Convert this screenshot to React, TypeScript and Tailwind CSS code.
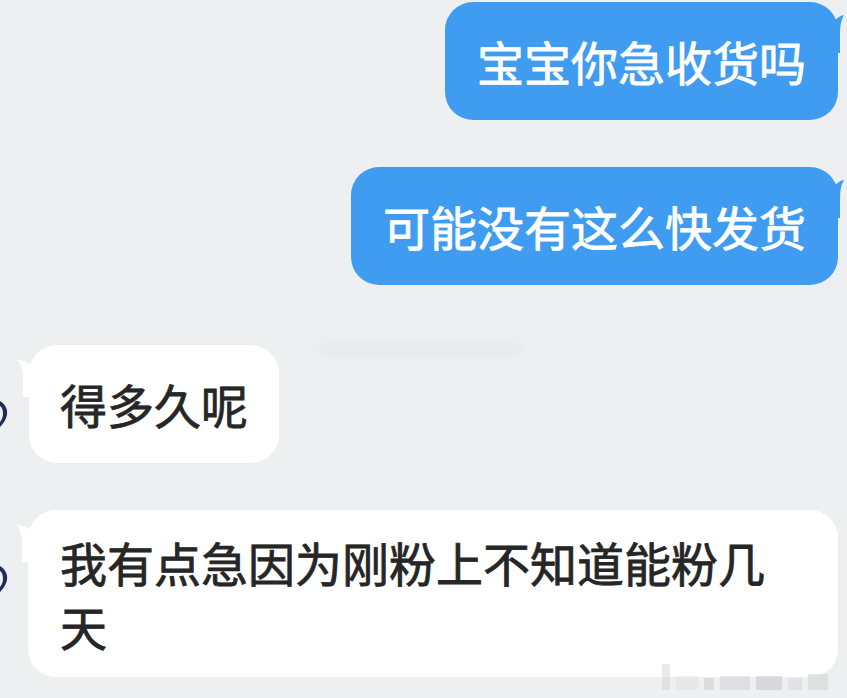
import React from 'react';

const font = { fontFamily: '"Noto Sans CJK SC", "Noto Sans", sans-serif' };

const RightTail = () => (
  <svg className="absolute -right-[8px] top-[11px]" width="14" height="40" viewBox="0 0 14 40">
    <path d="M0 9 C4 7 6 3 12 2 C9 7 8 13 8 20 L8 40 L0 40 Z" fill="#3f9cf1" />
  </svg>
);

const LeftTail = () => (
  <svg className="absolute -left-[12px] top-[12px]" width="16" height="40" viewBox="0 0 16 40">
    <path d="M16 8 C11 6 7 3 0 3 C4 7 6 13 6 20 L6 40 L16 40 Z" fill="#ffffff" />
  </svg>
);

const Avatar = () => (
  <div className="w-[12px] shrink-0 pt-[56px]">
    <svg width="12" height="26" viewBox="0 0 12 26">
      <path d="M0 0 C5 3 8 8 7 14 C6 19 3 23 0 26 L0 21 C2 18 3 16 3 13 C3 9 2 6 0 5 Z" fill="#1f2b5c" />
    </svg>
  </div>
);

type Msg = { text: string; side: 'left' | 'right' };

const messages: Msg[] = [
  { text: '宝宝你急收货吗', side: 'right' },
  { text: '可能没有这么快发货', side: 'right' },
  { text: '得多久呢', side: 'left' },
  { text: '我有点急因为刚粉上不知道能粉几天', side: 'left' },
];

export default function App() {
  return (
    <div className="relative w-[847px] h-[698px] overflow-hidden bg-[#eeeff1] pt-[2px]" style={font}>
      <div className="flex flex-col [-webkit-text-stroke:0.8px_currentColor]">
        {/* 我方消息 */}
        <div className="flex justify-end pr-[9px]">
          <div className="relative rounded-[28px] bg-[#3f9cf1] px-[32px] py-[27px] text-[47px] leading-[64px] text-white whitespace-nowrap">
            <RightTail />
            {messages[0].text}
          </div>
        </div>
        <div className="flex justify-end pr-[9px] mt-[47px]">
          <div className="relative rounded-[28px] bg-[#3f9cf1] px-[32px] py-[27px] text-[47px] leading-[64px] text-white whitespace-nowrap">
            <RightTail />
            {messages[1].text}
          </div>
        </div>

        {/* 对方消息 */}
        <div className="flex items-start mt-[60px]">
          <Avatar />
          <div className="relative ml-[17px] rounded-[28px] bg-white px-[31px] py-[27px] text-[47px] leading-[64px] text-[#262626] whitespace-nowrap">
            <LeftTail />
            {messages[2].text}
          </div>
        </div>
        <div className="flex items-start mt-[47px]">
          <Avatar />
          <div className="relative ml-[16px] w-[810px] rounded-[28px] bg-white px-[32px] pt-[20px] pb-[19px] text-[47px] leading-[64px] text-[#262626]">
            <LeftTail />
            {messages[3].text}
          </div>
        </div>
      </div>

      {/* 模糊水印 */}
      <div className="absolute left-[318px] top-[342px] w-[205px] h-[14px] rounded-full bg-[#e2e3e5] opacity-60 blur-[6px]" />
      <div className="absolute left-[662px] top-[664px] flex items-end gap-[6px] opacity-50">
        <div className="w-[8px] h-[26px] bg-[#d4d5d8]" />
        <div className="w-[22px] h-[14px] bg-[#e2e3e5]" />
        <div className="w-[10px] h-[12px] bg-[#c9cacd]" />
        <div className="w-[30px] h-[14px] bg-[#d0d1d4]" />
        <div className="w-[26px] h-[14px] bg-[#c4c5c8]" />
        <div className="w-[14px] h-[12px] bg-[#d6d7da]" />
        <div className="w-[20px] h-[16px] bg-[#cfd0d3]" />
      </div>
    </div>
  );
}
